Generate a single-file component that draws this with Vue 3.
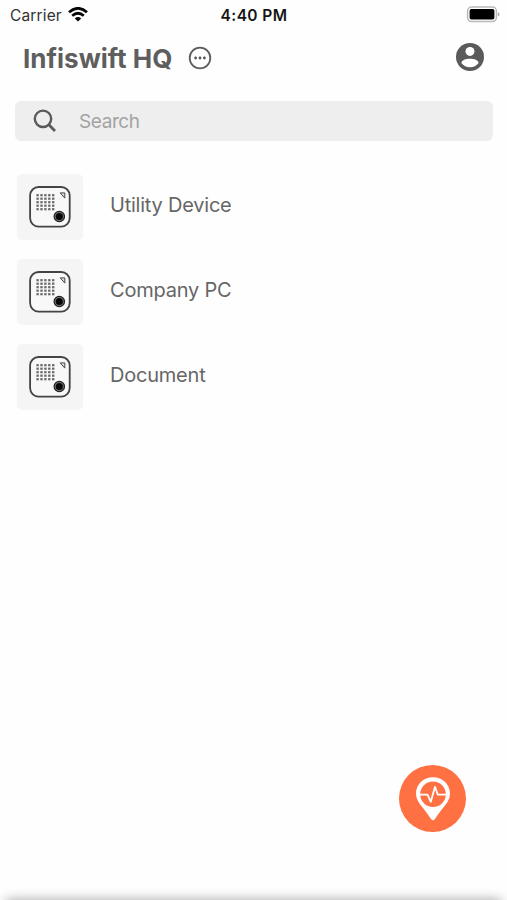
<script setup>
const devices = ['Utility Device', 'Company PC', 'Document']
const cols = [0, 1, 2, 3, 4]
const rows = [0, 1, 2, 3, 4]
</script>

<template>
  <main class="screen">
    <div class="status">
      <div class="carrier">
        <span class="carrier-name">Carrier</span>
        <svg class="wifi" width="20" height="15" viewBox="0 0 20 15">
          <g fill="none" stroke="#080808" stroke-width="2.7">
            <path d="M1 5.2Q10-2.6 19 5.2" />
            <path d="M4.2 8.8Q10 3.7 15.8 8.8" />
          </g>
          <path d="M6.8 11.4Q10 8.7 13.2 11.4L10 14.6Z" fill="#080808" />
        </svg>
      </div>
      <span class="time">4:40 PM</span>
      <svg class="battery" width="34" height="18" viewBox="0 0 34 18">
        <rect x="1.6" y="1" width="28.8" height="14.6" rx="4" fill="#fff" stroke="#b9b9b9" stroke-width="1.5" />
        <rect x="3.6" y="3" width="24.8" height="10.6" rx="1.8" fill="#000" />
        <path d="M31.8 6Q33.5 6.7 33.5 8.3Q33.5 9.9 31.8 10.6Z" fill="#aaa" />
      </svg>
    </div>

    <header class="header">
      <h1 class="title">Infiswift HQ</h1>
      <svg class="more" width="24" height="24" viewBox="0 0 24 24">
        <circle cx="12" cy="12" r="10.3" fill="none" stroke="#5c5c5c" stroke-width="1.8" />
        <g fill="#555">
          <circle cx="7.6" cy="12" r="1.4" />
          <circle cx="12" cy="12" r="1.4" />
          <circle cx="16.4" cy="12" r="1.4" />
        </g>
      </svg>
      <svg class="account" width="28" height="28" viewBox="0 0 28 28">
        <circle cx="14" cy="14" r="14" fill="#5a5a5a" />
        <circle cx="14" cy="8.4" r="4.5" fill="#fff" />
        <path d="M5.4 20C5.8 14.4 22.2 14.4 22.6 20C18.8 25.6 9.2 25.6 5.4 20Z" fill="#fff" />
      </svg>
    </header>

    <div class="search">
      <svg class="glass" width="24" height="24" viewBox="0 0 24 24" fill="none" stroke="#5a5a5a">
        <circle cx="10" cy="9.8" r="8.2" stroke-width="2.4" />
        <path d="M15.7 15.6L22 22" stroke-width="2.8" />
      </svg>
      <span class="placeholder">Search</span>
    </div>

    <ul class="list">
      <li v-for="name in devices" :key="name" class="device">
        <div class="tile">
          <svg width="42" height="42" viewBox="0 0 42 42">
            <rect x="1.1" y="1" width="39.6" height="39.6" rx="8.5" fill="#f8f8f8" stroke="#444" stroke-width="1.8" />
            <g fill="#6a6a6a">
              <template v-for="r in rows" :key="r">
                <rect v-for="c in cols" :key="c" :x="7.4 + c * 3.9" :y="8.1 + r * 3.5" width="2.4" height="2.2" />
              </template>
            </g>
            <path d="M31.2 6.9H35.8V12.1Z" fill="#ddd" stroke="#484848" stroke-width="1" />
            <circle cx="30.3" cy="30.5" r="5.2" fill="#777" stroke="#222" stroke-width="1.2" />
            <circle cx="30.3" cy="30.5" r="3.6" fill="#080808" />
          </svg>
        </div>
        <span class="name">{{ name }}</span>
      </li>
    </ul>

    <button class="fab" aria-label="Map">
      <svg width="36" height="46" viewBox="0 0 36 46">
        <path d="M18 1.2C8.2 1.2 1 8.4 1 17.7C1 26.6 9.3 31.7 15.8 42.7Q18 46 20.2 42.7C26.7 31.7 35 26.6 35 17.7C35 8.4 27.8 1.2 18 1.2Z" fill="#fff" />
        <circle cx="18" cy="18.3" r="12.8" fill="#ff7043" />
        <path d="M4.5 18.6H12.5L15.8 25.8L20 10.8L22.8 18.6H31.5" fill="none" stroke="#fff" stroke-width="1.8" stroke-linejoin="round" />
      </svg>
    </button>
    <div class="sheet-edge"></div>
  </main>
</template>

<style>
body {
  margin: 0;
  background: #fefefe;
}
</style>

<style scoped>
.screen {
  position: relative;
  box-sizing: border-box;
  width: 100%;
  height: 900px;
  overflow: hidden;
  background: #fefefe;
  color: #606060;
  font-family: Inter, "Liberation Sans", sans-serif;
}
.status {
  display: grid;
  grid-template-columns: 1fr auto 1fr;
  align-items: center;
  height: 29px;
  padding: 0 7px 0 10px;
  box-sizing: border-box;
}
.carrier {
  display: flex;
  align-items: center;
  gap: 6px;
}
.carrier-name {
  padding-top: 2px;
  color: #333;
  font-size: 15.5px;
  letter-spacing: 0.15px;
}
.time {
  padding: 2px 2px 0 0;
  color: #151515;
  font-size: 15.5px;
  font-weight: 600;
  letter-spacing: 0.4px;
}
.battery {
  justify-self: end;
}
.header {
  display: flex;
  align-items: center;
  height: 56px;
  padding: 0 23px;
}
.title {
  margin: 0;
  padding-top: 3px;
  width: 165px;
  color: #5e5e5e;
  font-size: 26px;
  font-weight: 700;
  line-height: 53px;
  white-space: nowrap;
}
.more {
  margin-top: 1px;
}
.account {
  margin-left: auto;
}
.search {
  display: flex;
  align-items: center;
  height: 40px;
  margin: 16px 14px 0 15px;
  padding-left: 18px;
  border-radius: 6px;
  background: #eee;
  box-sizing: border-box;
}
.placeholder {
  margin-left: 22px;
  color: #a3a3a3;
  font-size: 19px;
  letter-spacing: -0.4px;
}
.list {
  display: flex;
  flex-direction: column;
  gap: 19px;
  margin: 33px 0 0;
  padding: 0 17px;
  list-style: none;
}
.device {
  display: flex;
  align-items: center;
  gap: 27px;
  height: 66px;
}
.tile {
  display: flex;
  align-items: center;
  justify-content: center;
  width: 66px;
  height: 66px;
  padding-bottom: 1px;
  box-sizing: border-box;
  border-radius: 5px;
  background: #f5f5f5;
}
.name {
  padding-bottom: 5px;
  color: #666;
  font-size: 20px;
  letter-spacing: -0.22px;
}
.fab {
  position: absolute;
  right: 41px;
  bottom: 68px;
  display: flex;
  align-items: center;
  justify-content: center;
  width: 67px;
  height: 67px;
  padding: 0;
  border: 0;
  border-radius: 50%;
  background: #ff7043;
}
.sheet-edge {
  position: absolute;
  right: 6px;
  bottom: -10px;
  left: 6px;
  height: 10px;
  box-shadow: 0 0 12px rgba(0, 0, 0, 0.38);
}
</style>
